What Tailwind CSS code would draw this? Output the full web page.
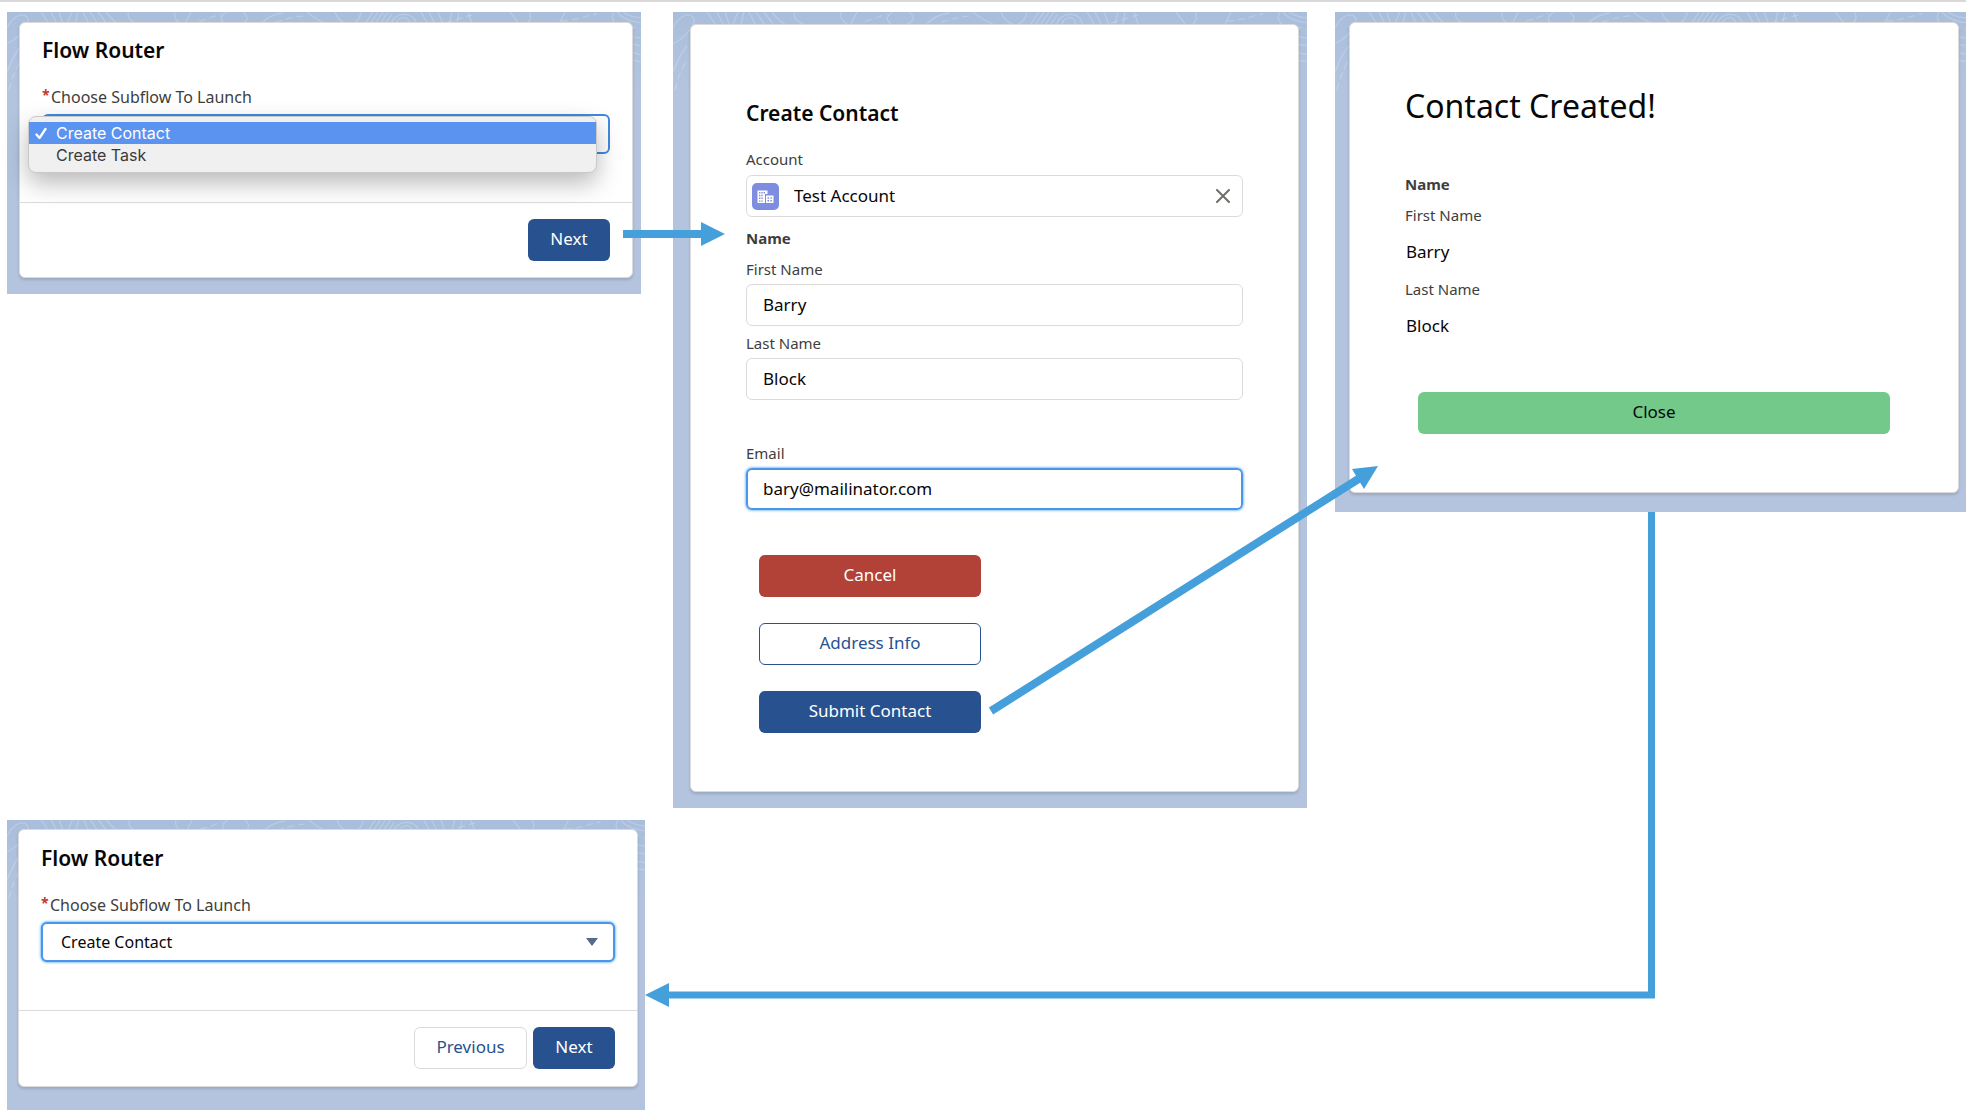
<!DOCTYPE html>
<html lang="en">
<head>
<meta charset="utf-8">
<title>Flow Router: Create Contact</title>
<script src="https://cdn.jsdelivr.net/npm/@tailwindcss/browser@4"></script>
</head>
<body class="relative flex min-h-screen flex-col overflow-x-hidden border-t-2 border-[#d9d9d9] bg-white font-['Noto_Sans','Open_Sans',sans-serif] text-[17px] text-[#080707]">

<!-- Contour lines shared by the panel backgrounds -->
<svg class="hidden" aria-hidden="true">
  <symbol id="contours" viewBox="0 0 634 90">
    <g fill="none" stroke="#fff" stroke-opacity=".2" stroke-width="1.3">
      <path d="M0 32C8 28 17 20 21 10C22 3 14 1 9 5C4 8 2 12 0 16M0 60C4 50 8 40 14 34M34 0L42 12M44 0L50 12M52 0L56 12M65 0L60 12M71 0L68 12M76 0L82 12M83 0L91 12M91 0L100 12M99 0C105 8 110 12 116 14M122 0C119 5 124 10 131 12M168 0C166 6 171 10 174 12M178 12L184 0"/>
      <path d="M218 12C212 8 214 3 220 0M236 0C243 5 240 10 234 12M254 12C259 6 268 2 276 1M300 0C306 5 312 9 320 12M328 0C330 6 334 10 340 12M345 12C351 10 353 5 354 0M358 12L366 0M363 12L371 0M368 12L376 0M373 12L381 0M378 12L385 2M389 12C391 4 403 3 402 12M384 12C387 -1 408 -1 409 12"/>
      <path d="M414 0L421 12M422 0L428 12M431 0L436 12M445 0L442 12M452 0L450 12M461 0L465 12M503 0L512 12M520 12C525 7 524 4 522 0M552 12L558 0M607 0C603 6 607 12 612 14"/>
      <path stroke-dasharray="7 4" d="M192 9C200 8 206 4 214 2M268 10C278 8 286 4 298 4M438 11C450 8 458 4 470 2M554 9C568 9 578 4 590 2M2 78C6 62 10 54 14 48M622 14C628 16 632 17 636 18"/>
      <path d="M610 0C616 8 626 10 636 11M616 0C622 4 630 6 636 6M622 24C628 25 632 26 636 26M622 32L636 34M622 40L636 43M622 48L636 50"/>
    </g>
  </symbol>
</svg>

<main class="grid flex-1 grid-cols-[638fr_634fr_631fr] gap-7 pt-2.5 pl-[7px]">

  <div class="flex flex-col justify-between gap-8">
    <!-- Subflow picker, list open -->
    <section class="relative mr-1 bg-linear-to-b from-[#a9bedb] to-[#b4c4df] to-[80px] pt-2.5 pr-2 pb-4 pl-3">
      <svg class="absolute top-0 left-0 w-full" viewBox="0 0 634 90" aria-hidden="true"><use href="#contours"/></svg>
      <form class="relative rounded-md border border-[#dddbda] bg-white shadow-[0_2px_3px_rgba(0,0,0,0.15)]">
        <div class="px-[22px] pt-3 pb-12">
          <h2 class="text-[21px] leading-[30px] font-semibold">Flow Router</h2>
          <label for="subflow-open" class="mt-5 flex text-base leading-6 text-[#3e3e3c]"><span class="w-[9px] text-sm font-bold text-[#c23934]">*</span>Choose Subflow To Launch</label>
          <div class="relative mt-[5px]">
            <select id="subflow-open" class="block h-10 w-full appearance-none rounded-md border-2 border-[#3f8ae0] bg-white px-4 text-base">
              <option>Create Contact</option>
              <option>Create Task</option>
            </select>
            <ul role="listbox" aria-label="Subflow" class="absolute top-0.5 right-[13px] -left-3.5 rounded-lg border border-[#c9c9c9] bg-[#f0f0f0] pt-[5px] pb-1 font-['Inter',sans-serif] text-base leading-[22px] text-[#3a3a3a] shadow-[0_10px_24px_rgba(0,0,0,0.28)]">
              <li role="option" aria-selected="true" class="flex items-center bg-[#5b93f0] text-white">
                <svg class="mr-2 ml-1.5 size-[13px]" viewBox="0 0 13 13" fill="none" stroke="currentColor" stroke-width="2.300" stroke-linecap="round" stroke-linejoin="round" aria-hidden="true"><path d="M1.500 7.500L4.500 11L10.500 2"/></svg>Create Contact
              </li>
              <li role="option" aria-selected="false" class="pb-0.5 pl-[27px]">Create Task</li>
            </ul>
          </div>
        </div>
        <div class="flex justify-end border-t border-[#dddbda] px-[22px] pt-4 pb-4">
          <button type="button" class="h-[42px] w-[82px] rounded-md bg-[#28528f] pb-0.5 text-white">Next</button>
        </div>
      </form>
    </section>

    <!-- Subflow picker after returning -->
    <section class="relative bg-linear-to-b from-[#a9bedb] to-[#b4c4df] to-[80px] pt-[9px] pr-[7px] pb-[23px] pl-[11px]">
      <svg class="absolute top-0 left-0 w-full" viewBox="0 0 634 90" aria-hidden="true"><use href="#contours"/></svg>
      <form class="relative rounded-md border border-[#dddbda] bg-white shadow-[0_2px_3px_rgba(0,0,0,0.15)]">
        <div class="px-[22px] pt-[13px] pb-12">
          <h2 class="text-[21px] leading-[30px] font-semibold">Flow Router</h2>
          <label for="subflow" class="mt-5 flex text-base leading-6 text-[#3e3e3c]"><span class="w-[9px] text-sm font-bold text-[#c23934]">*</span>Choose Subflow To Launch</label>
          <div class="relative mt-[5px]">
            <select id="subflow" class="block h-10 w-full appearance-none rounded-md border-2 border-[#4a96ea] bg-white px-[18px] text-base shadow-[0_0_3px_#1589ee]">
              <option>Create Contact</option>
              <option>Create Task</option>
            </select>
            <svg class="pointer-events-none absolute top-4 right-[17px] h-2 w-3" viewBox="0 0 12 8" aria-hidden="true"><path fill="#54698d" d="M0 0H12L6 8Z"/></svg>
          </div>
        </div>
        <div class="flex justify-end gap-1.5 border-t border-[#dddbda] px-[22px] pt-4 pb-[17px]">
          <button type="button" class="h-[42px] w-[113px] rounded-md border border-[#dddbda] bg-white pb-0.5 text-[#28528f]">Previous</button>
          <button type="button" class="h-[42px] w-[82px] rounded-md bg-[#28528f] pb-0.5 text-white">Next</button>
        </div>
      </form>
    </section>
  </div>

  <!-- Contact form -->
  <section class="relative self-start bg-linear-to-b from-[#a9bedb] to-[#b4c4df] to-[80px] pt-3 pr-2 pb-4 pl-[17px]">
    <svg class="absolute top-0 left-0 w-full" viewBox="0 0 634 90" aria-hidden="true"><use href="#contours"/></svg>
    <form class="relative rounded-md border border-[#dddbda] bg-white px-[55px] pt-[73px] pb-[58px] shadow-[0_2px_3px_rgba(0,0,0,0.15)]">
      <h2 class="text-[21px] leading-[30px] font-semibold">Create Contact</h2>
      <label for="account" class="mt-[19px] block text-[15px] leading-6 text-[#3e3e3c]">Account</label>
      <div class="mt-1 flex h-[42px] items-center rounded-md border border-[#dddbda] pr-3 pl-[5px]">
        <svg class="size-[27px] shrink-0" viewBox="0 0 27 27" aria-hidden="true">
          <rect width="27" height="27" rx="5" fill="#7f8de1"/>
          <path fill="#fff" d="M5.500 7.500H15.500V11H13V20H5.500ZM14 12.500H21.500V20H14Z"/>
          <path fill="#7f8de1" d="M7 9h1.400v1.400H7zM9.300 9h1.400v1.400H9.300zM11.600 9H13v1.400h-1.400zM7 11.800h1.400v1.400H7zM9.300 11.800h1.400v1.400H9.300zM7 14.600h1.400V16H7zM9.300 14.600h1.400V16H9.300zM7 17.400h1.400v1.400H7zM9.300 17.400h1.400v1.400H9.300zM15.500 14.300h1.500v1.400h-1.500zM18.400 14.300h1.500v1.400h-1.500zM15.500 17h1.500v1.400h-1.500zM18.400 17h1.500v1.400h-1.500z"/>
        </svg>
        <input id="account" type="text" value="Test Account" class="ml-[15px] h-full min-w-0 flex-1 bg-transparent pb-0.5">
        <button type="button" aria-label="Clear account" class="text-[#706e6b]">
          <svg class="size-[14px]" viewBox="0 0 14 14" fill="none" stroke="currentColor" stroke-width="2" stroke-linecap="round" aria-hidden="true"><path d="M1 1L13 13M13 1L1 13"/></svg>
        </button>
      </div>
      <h3 class="mt-[9px] text-[15px] leading-6 font-bold text-[#3e3e3c]">Name</h3>
      <label for="first" class="mt-[7px] block text-[15px] leading-6 text-[#3e3e3c]">First Name</label>
      <input id="first" type="text" value="Barry" class="mt-[3px] block h-[42px] w-full rounded-md border border-[#dddbda] px-4 pb-0.5">
      <label for="last" class="mt-[5px] block text-[15px] leading-6 text-[#3e3e3c]">Last Name</label>
      <input id="last" type="text" value="Block" class="mt-[3px] block h-[42px] w-full rounded-md border border-[#dddbda] px-4 pb-0.5">
      <label for="email" class="mt-[41px] block text-[15px] leading-6 text-[#3e3e3c]">Email</label>
      <input id="email" type="email" value="bary@mailinator.com" class="mt-[3px] block h-[42px] w-full rounded-md border-2 border-[#4a96ea] px-[15px] pb-0.5 shadow-[0_0_3px_#1589ee]">
      <div class="mt-[45px] ml-[13px] flex w-[222px] flex-col gap-[26px]">
        <button type="button" class="h-[42px] rounded-md bg-[#b24238] pb-0.5 text-white">Cancel</button>
        <button type="button" class="h-[42px] rounded-md border border-[#28528f] bg-white pb-0.5 text-[#28528f]">Address Info</button>
        <button type="button" class="h-[42px] rounded-md bg-[#28528f] pb-0.5 text-white">Submit Contact</button>
      </div>
    </form>
  </section>

  <!-- Confirmation -->
  <section class="relative self-start bg-linear-to-b from-[#a9bedb] to-[#b4c4df] to-[80px] pt-2.5 pr-[7px] pb-[19px] pl-3.5">
    <svg class="absolute top-0 left-0 w-full" viewBox="0 0 634 90" aria-hidden="true"><use href="#contours"/></svg>
    <div class="relative rounded-md border border-[#dddbda] bg-white px-[55px] pt-[63px] pb-[58px] shadow-[0_2px_3px_rgba(0,0,0,0.15)]">
      <h1 class="text-[32px] leading-10">Contact Created!</h1>
      <h3 class="mt-[46px] text-[15px] leading-6 font-bold text-[#3e3e3c]">Name</h3>
      <dl>
        <dt class="mt-[7px] text-[15px] leading-6 text-[#3e3e3c]">First Name</dt>
        <dd class="mt-1 pl-px leading-[42px]">Barry</dd>
        <dt class="mt-1 text-[15px] leading-6 text-[#3e3e3c]">Last Name</dt>
        <dd class="mt-1 pl-px leading-[42px]">Block</dd>
      </dl>
      <div class="mt-[45px] px-[13px]">
        <button type="button" class="h-[42px] w-full rounded-md bg-[#72c989] pb-0.5">Close</button>
      </div>
    </div>
  </section>
</main>

<!-- Connectors between the steps -->
<svg class="pointer-events-none absolute -top-0.5 left-0 w-full" viewBox="0 0 1966 1110" fill="none" stroke="#459fdb" stroke-width="8" aria-hidden="true">
  <path d="M623 234H702"/>
  <path fill="#459fdb" stroke="none" d="M701 222L725 234L701 246Z"/>
  <path d="M991 711L1360 478"/>
  <path fill="#459fdb" stroke="none" d="M1352 469L1378 466L1364 489Z"/>
  <path stroke-width="7" d="M1651.500 512V995H668"/>
  <path fill="#459fdb" stroke="none" d="M669 983L645 995L669 1007Z"/>
</svg>
</body>
</html>
